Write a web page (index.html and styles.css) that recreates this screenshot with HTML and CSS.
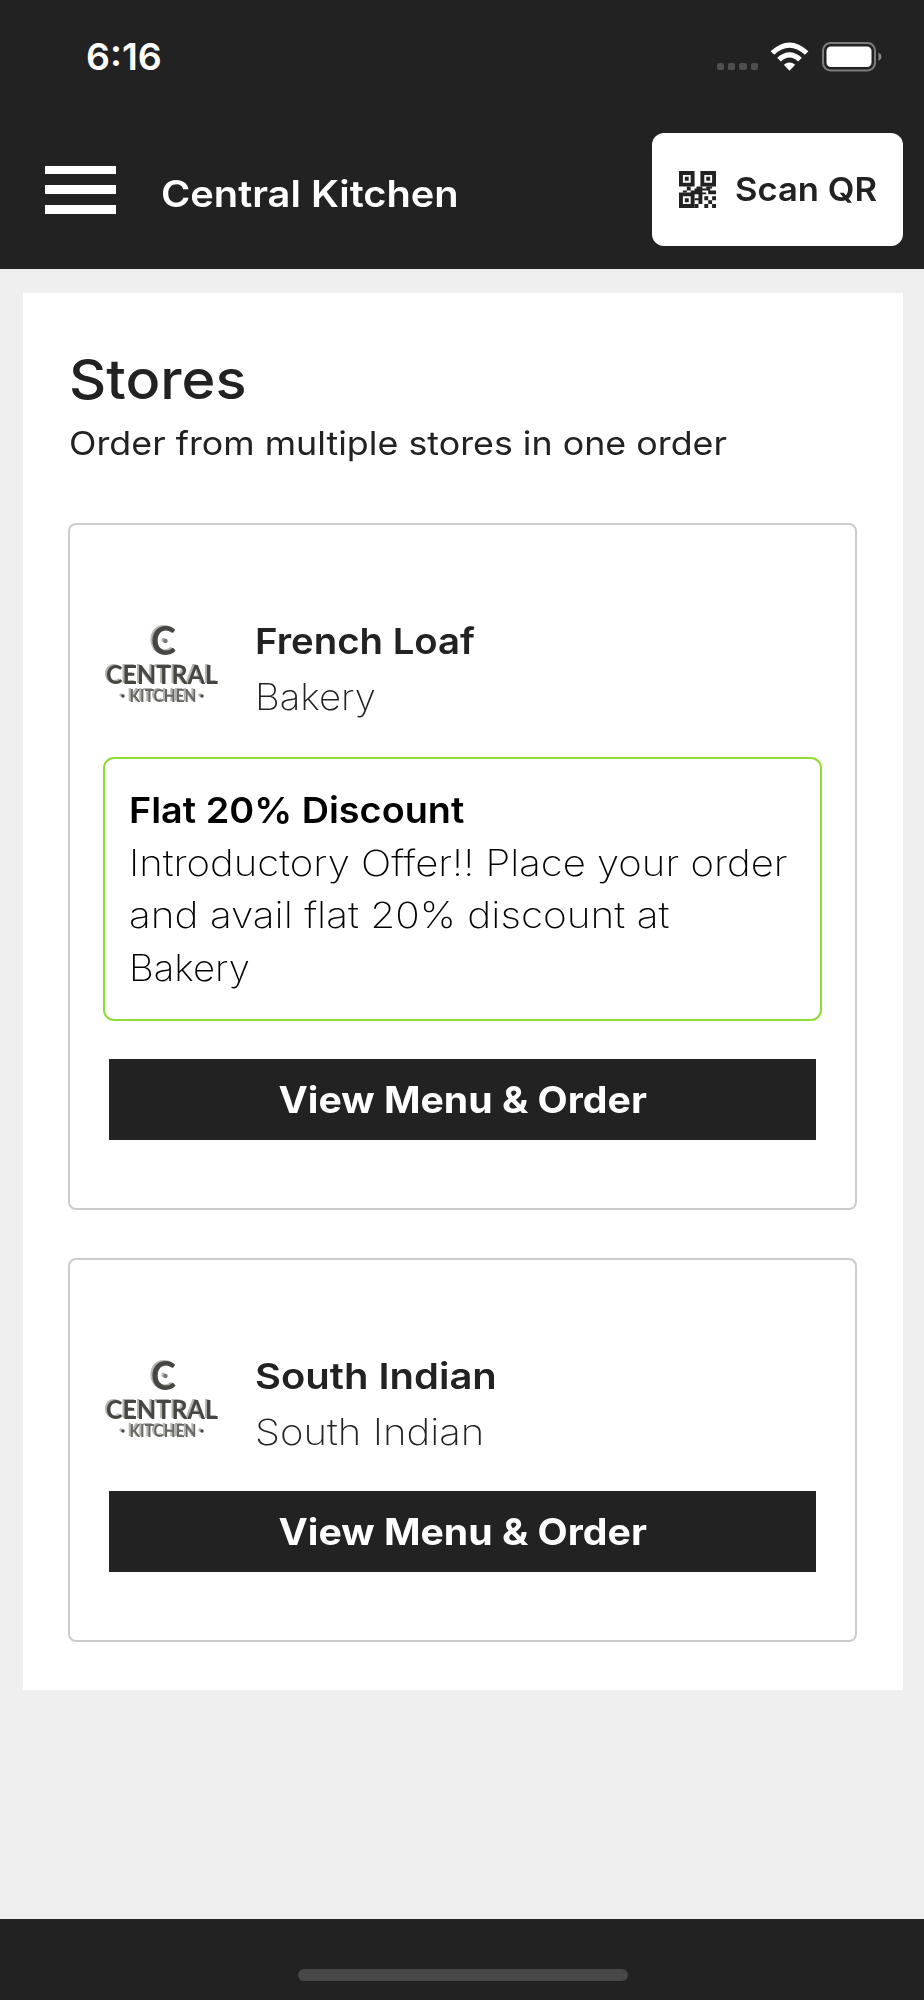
FILE: index.html
```html
<!DOCTYPE html>
<html lang="en">
<head>
<meta charset="utf-8">
<title>Central Kitchen</title>
<link rel="stylesheet" href="styles.css">
</head>
<body>
<div class="screen">
  <header class="header">
    <div class="status">
      <span class="time">6:16</span>
      <div class="indicators">
        <span class="cell"><i></i><i></i><i></i><i></i></span>
        <svg class="wifi" viewBox="0 0 39 29">
          <path d="M.6 9.300Q19.500-8.300 38.400 9.300L34.900 12.800Q19.500-1.400 4.100 12.800Z"/>
          <path d="M7.200 15.800Q19.500 4.700 31.800 15.800L28.200 19.400Q19.500 11.800 10.800 19.400Z"/>
          <path d="M13.800 22.700Q19.500 18.200 25.200 22.700L19.500 28.700Z"/>
        </svg>
        <svg class="battery" viewBox="0 0 60 30">
          <rect class="battery-case" x="1" y="1" width="52" height="27.500" rx="7.500"/>
          <rect class="battery-level" x="4.500" y="4.500" width="45" height="20.500" rx="4.500"/>
          <path class="battery-cap" d="M56.500 10.500Q59.500 12 59.500 14.800T56.500 19Z"/>
        </svg>
      </div>
    </div>
    <nav class="nav">
      <div class="menu"><i></i><i></i><i></i></div>
      <h1 class="brand wide">Central Kitchen</h1>
      <button class="scan">
        <svg class="qr" viewBox="0 0 19 19">
          <path fill-rule="evenodd" d="M0 0h8v8H0zM2 2v4h4V2zM3 3h2v2H3zM11 0h8v8h-8zM13 2v4h4V2zM14 3h2v2h-2zM0 11h8v8H0zM2 13v4h4v-4zM3 14h2v2H3z"/>
          <path d="M4 8h2v2H4zM2 10h2v1H2zM6 10h2v2H6zM8 9h3v2H8zM10 10h2v7h-2zM8 11h3v1H8zM8 14h2v1H8zM8 17h2v2H8zM9 8h3v2H9zM12 9h2v1h-2zM14 8h3v1h-1v1h-2zM15 10h2v2h-2zM17 10h2v2h-2zM12 11h2v1h-2zM17 13h2v2h-2zM13 13h2v2h-2zM15 15h2v2h-2zM13 17h2v2h-2zM17 17h2v2h-2z"/>
        </svg>
        <span class="scan-label wide">Scan QR</span>
      </button>
    </nav>
  </header>
  <main class="panel">
    <h2 class="title wide">Stores</h2>
    <p class="subtitle wide">Order from multiple stores in one order</p>
    <section class="card">
      <div class="store">
        <svg class="logo" viewBox="0 0 118 90">
          <text class="logo-c" x="48" y="33" textLength="25" lengthAdjust="spacingAndGlyphs">C</text>
          <circle class="logo-ring" cx="62.500" cy="19" r="2.200"/>
          <text class="logo-central" x="3" y="62" textLength="112" lengthAdjust="spacingAndGlyphs">CENTRAL</text>
          <text class="logo-kitchen" x="26.500" y="80" textLength="67" lengthAdjust="spacingAndGlyphs">KITCHEN</text>
          <circle class="logo-dot" cx="20" cy="74" r="1.700"/><circle class="logo-dot" cx="99" cy="74" r="1.700"/>
        </svg>
        <div>
          <h3 class="name name-loaf wide">French Loaf</h3>
          <p class="kind kind-bakery wide">Bakery</p>
        </div>
      </div>
      <div class="offer">
        <h4 class="offer-title wide">Flat 20% Discount</h4>
        <p class="offer-text wide">Introductory Offer!! Place your order</p>
        <p class="offer-text offer-mid wide">and avail flat 20% discount at</p>
        <p class="offer-text offer-end wide">Bakery</p>
      </div>
      <button class="order"><span class="order-label wide">View Menu &amp; Order</span></button>
    </section>
    <section class="card">
      <div class="store">
        <svg class="logo" viewBox="0 0 118 90">
          <text class="logo-c" x="48" y="33" textLength="25" lengthAdjust="spacingAndGlyphs">C</text>
          <circle class="logo-ring" cx="62.500" cy="19" r="2.200"/>
          <text class="logo-central" x="3" y="62" textLength="112" lengthAdjust="spacingAndGlyphs">CENTRAL</text>
          <text class="logo-kitchen" x="26.500" y="80" textLength="67" lengthAdjust="spacingAndGlyphs">KITCHEN</text>
          <circle class="logo-dot" cx="20" cy="74" r="1.700"/><circle class="logo-dot" cx="99" cy="74" r="1.700"/>
        </svg>
        <div>
          <h3 class="name wide">South Indian</h3>
          <p class="kind wide">South Indian</p>
        </div>
      </div>
      <button class="order"><span class="order-label wide">View Menu &amp; Order</span></button>
    </section>
  </main>
  <footer class="footer"><div class="home"></div></footer>
</div>
</body>
</html>
```

FILE: styles.css
```css
* { box-sizing: border-box; margin: 0; padding: 0; }
body { background: #efefef; color: #222; font-family: Inter, "Liberation Sans", sans-serif; }
button { font: inherit; border: 0; }
/* widened letterforms; each text sets its own --stretch */
.wide { width: fit-content; transform: scaleX(var(--stretch)); transform-origin: left; }
.screen { width: 924px; height: 2000px; display: flex; flex-direction: column; white-space: nowrap; }
.header { height: 269px; background: #222; color: #fff; flex: none; }
.status { height: 113px; padding: 0 42px 0 86px; display: flex; align-items: center; justify-content: space-between; }
.time { font-size: 37.500px; font-weight: 600; }
.indicators { display: flex; align-items: center; }
.cell { display: flex; gap: 4px; margin: 20px 12px 0 0; }
.cell i { width: 7.300px; height: 7px; border-radius: 2px; background: #4f4f4f; }
.wifi { width: 39px; height: 29px; fill: #fff; margin-right: 13px; }
.battery { width: 60px; height: 30px; }
.battery-case { fill: none; stroke: #7c7c7c; stroke-width: 2; }
.battery-level { fill: #fff; }
.battery-cap { fill: #8a8a8a; }
.nav { height: 156px; padding: 0 21px 3px 45px; display: flex; align-items: center; }
.menu { width: 71px; height: 48px; display: flex; flex-direction: column; justify-content: space-between; }
.menu i { height: 8.700px; background: #fff; }
.brand { --stretch: 1.075; margin-left: 44.500px; padding-top: 8px; font-size: 37px; font-weight: 600; }
.scan { margin-left: auto; width: 251px; height: 113px; border-radius: 12px; background: #fff; color: #222; display: flex; align-items: center; padding-left: 27px; }
.qr { width: 37px; height: 37px; fill: #222; flex: none; }
.scan-label { --stretch: 1.048; margin: -2px 0 0 19px; font-size: 33px; font-weight: 600; }
.panel { margin: 24px 21px 0 23px; padding: 55px 46px 47px 45px; background: #fff; height: 1397px; flex: none; }
.title { --stretch: 1.050; font-size: 55px; line-height: 63px; font-weight: 500; padding: 0 0 1px 1px; }
.subtitle { --stretch: 1.085; margin-top: 7px; font-size: 33px; line-height: 48px; padding-left: 1px; }
.card { margin-top: 56px; border: 2px solid #ccc; border-radius: 8px; padding: 88px 34px 68px; }
.card + .card { margin-top: 48px; }
.store { display: flex; padding-left: 1px; }
.logo { width: 118px; height: 90px; margin: 9px 34px 0 -2px; fill: #464642; font-family: Lato, sans-serif; font-weight: 700; filter: drop-shadow(-1.200px -.8px 0 #b4b4b0); }
.logo-c { font-size: 40px; }
.logo-central { font-size: 26px; }
.logo-kitchen { font-size: 16.500px; fill: #666662; }
.logo-ring { fill: #777; }
.name { --stretch: 1.110; font-size: 36px; line-height: 56px; font-weight: 600; }
.name-loaf { --stretch: 1.065; }
.kind { --stretch: 1.115; font-size: 36px; line-height: 56px; font-weight: 200; }
.kind-bakery { --stretch: 1.065; }
.offer { margin: 32px -1px 0; border: 2px solid #90dc35; border-radius: 11px; padding: 25px 20px 25px 24px; color: #000; height: 264px; }
.offer-title { --stretch: 1.050; font-size: 36px; line-height: 52.500px; font-weight: 600; }
.offer-text { --stretch: 1.114; font-size: 36px; line-height: 52.500px; font-weight: 200; }
.offer-mid { --stretch: 1.126; }
.offer-end { --stretch: 1.065; }
.order { display: flex; align-items: center; justify-content: center; width: 707px; height: 81px; margin: 31px auto 0; background: #222; color: #fff; font-size: 37px; font-weight: 700; }
.order-label { --stretch: 1.060; transform-origin: center; }
.offer + .order { margin-top: 38px; }
.footer { margin-top: auto; height: 81px; background: #222; display: flex; justify-content: center; padding: 50px 0 0 1px; }
.home { width: 330px; height: 12px; border-radius: 6px; background: #484848; }
```
